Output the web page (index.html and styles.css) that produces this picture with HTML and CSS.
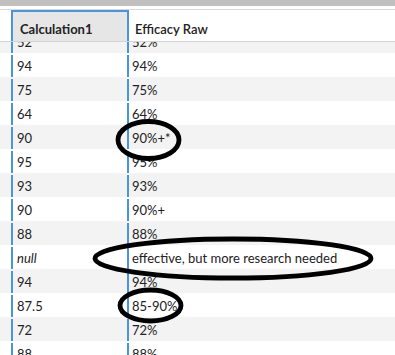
FILE: index.html
```html
<!DOCTYPE html>
<html lang="en">

<head>
    <meta charset="UTF-8">
    <meta name="viewport" content="width=device-width, initial-scale=1.0">
    <title>Efficacy</title>
    <link rel="stylesheet" href="styles.css">
</head>

<body>
    <div class="topbar"></div>
    <div class="sheet">
        <div class="head">
            <div class="gutter"></div>
            <div class="calc head-calc">Calculation1</div>
            <div class="raw head-raw">Efficacy Raw</div>
        </div>
        <div class="rows">
            <div class="row"><div class="gutter"></div><div class="calc">52</div><div class="raw">52%</div></div>
            <div class="row"><div class="gutter"></div><div class="calc">94</div><div class="raw">94%</div></div>
            <div class="row"><div class="gutter"></div><div class="calc">75</div><div class="raw">75%</div></div>
            <div class="row"><div class="gutter"></div><div class="calc">64</div><div class="raw">64%</div></div>
            <div class="row"><div class="gutter"></div><div class="calc">90</div><div class="raw">90%+*</div></div>
            <div class="row"><div class="gutter"></div><div class="calc">95</div><div class="raw">95%</div></div>
            <div class="row"><div class="gutter"></div><div class="calc">93</div><div class="raw">93%</div></div>
            <div class="row"><div class="gutter"></div><div class="calc">90</div><div class="raw">90%+</div></div>
            <div class="row"><div class="gutter"></div><div class="calc">88</div><div class="raw">88%</div></div>
            <div class="row"><div class="gutter"></div><div class="calc null">null</div><div class="raw">effective, but more research needed</div></div>
            <div class="row"><div class="gutter"></div><div class="calc">94</div><div class="raw">94%</div></div>
            <div class="row"><div class="gutter"></div><div class="calc">87.5</div><div class="raw">85-90%</div></div>
            <div class="row"><div class="gutter"></div><div class="calc">72</div><div class="raw">72%</div></div>
            <div class="row"><div class="gutter"></div><div class="calc">88</div><div class="raw">88%</div></div>
        </div>
    </div>

    <!-- marker circles drawn over the grid -->
    <svg class="marks" width="395" height="355">
        <ellipse cx="148.5" cy="140" rx="30.5" ry="18.5"></ellipse>
        <ellipse cx="233" cy="258.5" rx="138" ry="19.5"></ellipse>
        <ellipse cx="150.5" cy="305.5" rx="30.5" ry="15.5"></ellipse>
    </svg>
</body>

</html>
```

FILE: styles.css
```css
body {
    margin: 0;
    width: 395px;
    height: 355px;
    overflow: hidden;
    position: relative;
    background: #fff;
    font-family: Lato, "Liberation Sans", sans-serif;
    font-size: 13px;
    color: #222;
}

.topbar {
    height: 6px;
    background: #c0c0c0;
}

.sheet {
    margin-top: 3px;
    border-top: 1px solid #dadada;
}

/* header sits above the scrolled rows */
.head {
    position: relative;
    z-index: 1;
    display: flex;
    height: 31px;
    background: #fff;
    border-bottom: 1px solid #d4d4d4;
    font-weight: bold;
}

.gutter {
    width: 11px;
    flex: none;
}

.calc {
    width: 118px;
    flex: none;
    box-sizing: border-box;
    border-left: 2px solid #4a94dc;
    border-right: 2px solid #4a94dc;
    padding-left: 4px;
}

.raw {
    flex: 1;
    padding-left: 3px;
    white-space: nowrap;
}

.head-calc {
    border-top: 2px solid #4a94dc;
    background: #e6e6e6;
    padding: 9px 0 0 7px;
}

.head-raw {
    padding: 11px 0 0 6px;
    font-weight: 600;
}

.rows {
    margin-top: -13px;
}

.row {
    display: flex;
    height: 24px;
    box-sizing: border-box;
    padding-top: 2px;
    line-height: 22px;
}

.row:nth-child(odd) {
    background: #f3f3f3;
}

.null {
    font-style: italic;
}

.marks {
    position: absolute;
    top: 0;
    left: 0;
    pointer-events: none;
}

.marks ellipse {
    fill: none;
    stroke: #000;
    stroke-width: 4.8px;
}
```
